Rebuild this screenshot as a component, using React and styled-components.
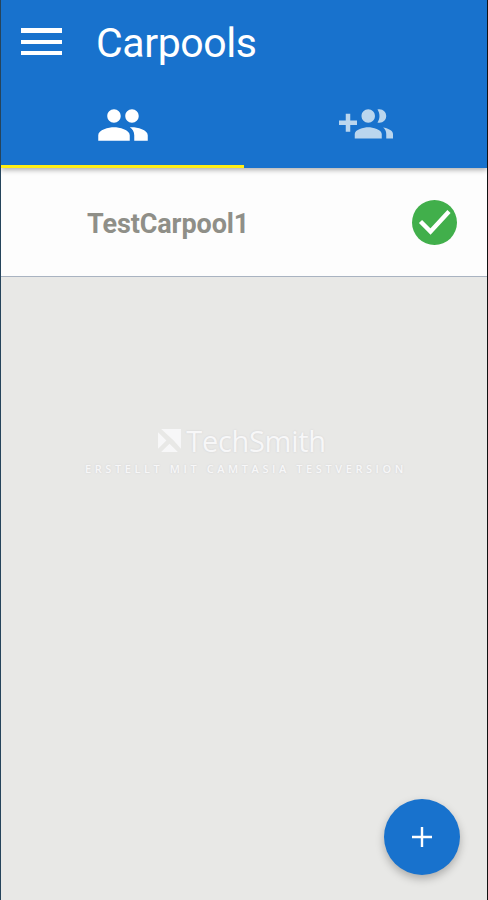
import React from "react";
import styled, { createGlobalStyle } from "styled-components";

const Global = createGlobalStyle`
  * { box-sizing: border-box; }
  body { margin: 0; background: #e8e8e6; }
`;
const Screen = styled.div`
  position: relative;
  display: flex;
  flex-direction: column;
  width: 488px;
  height: 900px;
  overflow: hidden;
  background: #e8e8e6;
  border-left: 1px solid #25445c;
  border-right: 1px solid #111;
  font-family: Roboto, sans-serif;
`;
const Header = styled.header`
  position: relative;
  z-index: 1;
  height: 168px;
  background: #1872cd;
  box-shadow: 0 2px 5px rgba(0, 0, 0, 0.32);
`;
const TitleBar = styled.div`
  display: flex;
  align-items: center;
  height: 84px;
  padding-left: 20px;
  gap: 34px;
`;
const MenuIcon = styled.svg`
  display: block;
  width: 41px;
  height: 28px;
`;
const Title = styled.h1`
  margin: 2px 0 0;
  color: #fff;
  font-size: 41px;
  font-weight: 400;
  line-height: 48px;
  letter-spacing: -0.4px;
`;
const Tabs = styled.nav`
  display: grid;
  grid-template-columns: 243px 243px;
  height: 84px;
`;
const Tab = styled.button`
  display: flex;
  align-items: center;
  justify-content: center;
  padding: 0;
  border: 0;
  border-bottom: 3px solid ${(p) => (p.$active ? "#ffee14" : "transparent")};
  background: transparent;
  color: ${(p) => (p.$active ? "#fff" : "#bad6ee")};
`;
const TabIcon = styled.svg`
  display: block;
  width: 54px;
  height: 54px;
  fill: currentColor;
`;
const Row = styled.div`
  display: flex;
  align-items: center;
  justify-content: space-between;
  height: 109px;
  padding: 0 30px 0 86px;
  background: #fdfdfd;
  border-bottom: 1px solid #a9b3c1;
`;
const Name = styled.span`
  padding-top: 3px;
  color: #8f8f88;
  font-size: 27px;
  font-weight: 700;
  line-height: 32px;
  letter-spacing: -0.1px;
`;
const Check = styled.svg`
  display: block;
  width: 45px;
  height: 45px;
`;
const Watermark = styled.div`
  display: flex;
  flex-direction: column;
  align-items: center;
  margin-top: 146px;
  padding-left: 4px;
  color: #f7f7f8;
  text-shadow: 0 0 2px #cfcfd2;
`;
const Brand = styled.div`
  display: flex;
  align-items: center;
  gap: 4px;
  height: 34px;
  padding-right: 9px;
  font-family: "Open Sans", sans-serif;
  font-size: 29px;
  letter-spacing: -0.3px;
`;
const BrandIcon = styled.svg`
  width: 25px;
  height: 25px;
`;
const Caption = styled.div`
  margin-top: 5px;
  font-family: "Open Sans", sans-serif;
  font-size: 11px;
  font-weight: 600;
  line-height: 14px;
  letter-spacing: 3.58px;
  white-space: nowrap;
`;
const AddButton = styled.button`
  position: absolute;
  right: 27px;
  bottom: 25px;
  display: flex;
  align-items: center;
  justify-content: center;
  width: 76px;
  height: 76px;
  padding: 0;
  border: 0;
  border-radius: 50%;
  background: #1872cd;
  box-shadow: 0 4px 8px rgba(0, 0, 0, 0.26);
`;
const PlusIcon = styled.svg`
  width: 20px;
  height: 20px;
`;

export default function App() {
  return (
    <>
      <Global />
      <Screen>
        <Header>
          <TitleBar>
            <MenuIcon viewBox="0 0 41 28">
              <path fill="#fff" d="M0 0h41v5H0zM0 12h41v4H0zM0 23h41v4H0z" />
            </MenuIcon>
            <Title>Carpools</Title>
          </TitleBar>
          <Tabs>
            <Tab $active aria-label="Carpools">
              <TabIcon viewBox="0 0 24 24">
                <path d="M16 11c1.66 0 2.99-1.34 2.99-3S17.66 5 16 5c-1.66 0-3 1.34-3 3s1.34 3 3 3zm-8 0c1.66 0 2.99-1.34 2.99-3S9.66 5 8 5C6.34 5 5 6.34 5 8s1.34 3 3 3zm0 2c-2.33 0-7 1.17-7 3.5V19h14v-2.5c0-2.33-4.67-3.5-7-3.5zm8 0c-.29 0-.62.02-.97.05 1.16.84 1.97 1.97 1.97 3.45V19h6v-2.5c0-2.33-4.67-3.5-7-3.5z" />
              </TabIcon>
            </Tab>
            <Tab aria-label="Add carpool">
              <TabIcon viewBox="0 0 24 24">
                <path d="M8 10H5V7H3v3H0v2h3v3h2v-3h3v-2zm10 1c1.66 0 2.99-1.34 2.99-3S19.66 5 18 5c-.32 0-.63.05-.91.14.57.81.9 1.79.9 2.86s-.34 2.04-.9 2.86c.28.09.59.14.91.14zm-5 0c1.66 0 2.99-1.34 2.99-3S14.66 5 13 5c-1.66 0-3 1.34-3 3s1.34 3 3 3zm6.62 2.16c.83.73 1.38 1.66 1.38 2.84v2h3v-2c0-1.54-2.37-2.49-4.38-2.84zM13 13c-2 0-6 1-6 3v2h12v-2c0-2-4-3-6-3z" />
              </TabIcon>
            </Tab>
          </Tabs>
        </Header>
        <Row>
          <Name>TestCarpool1</Name>
          <Check viewBox="0 0 45 45">
            <circle cx="22.5" cy="22.5" r="22.5" fill="#41af4b" />
            <path d="M8.5 21.5l10 10L37 11.5" fill="none" stroke="#fff" strokeWidth="4.4" />
          </Check>
        </Row>
        <Watermark>
          <Brand>
            <BrandIcon viewBox="0 0 24 24">
              <path fill="#f7f7f8" d="M4 1h19v19L16 12zM1 4l8 8-8 8zM12 15l8 8H4z" />
            </BrandIcon>
            <span>TechSmith</span>
          </Brand>
          <Caption>ERSTELLT MIT CAMTASIA TESTVERSION</Caption>
        </Watermark>
        <AddButton aria-label="Add">
          <PlusIcon viewBox="0 0 20 20">
            <path fill="#fff" d="M8.8 0h2.4v8.8H20v2.4h-8.8V20H8.8v-8.8H0V8.8h8.8z" />
          </PlusIcon>
        </AddButton>
      </Screen>
    </>
  );
}
